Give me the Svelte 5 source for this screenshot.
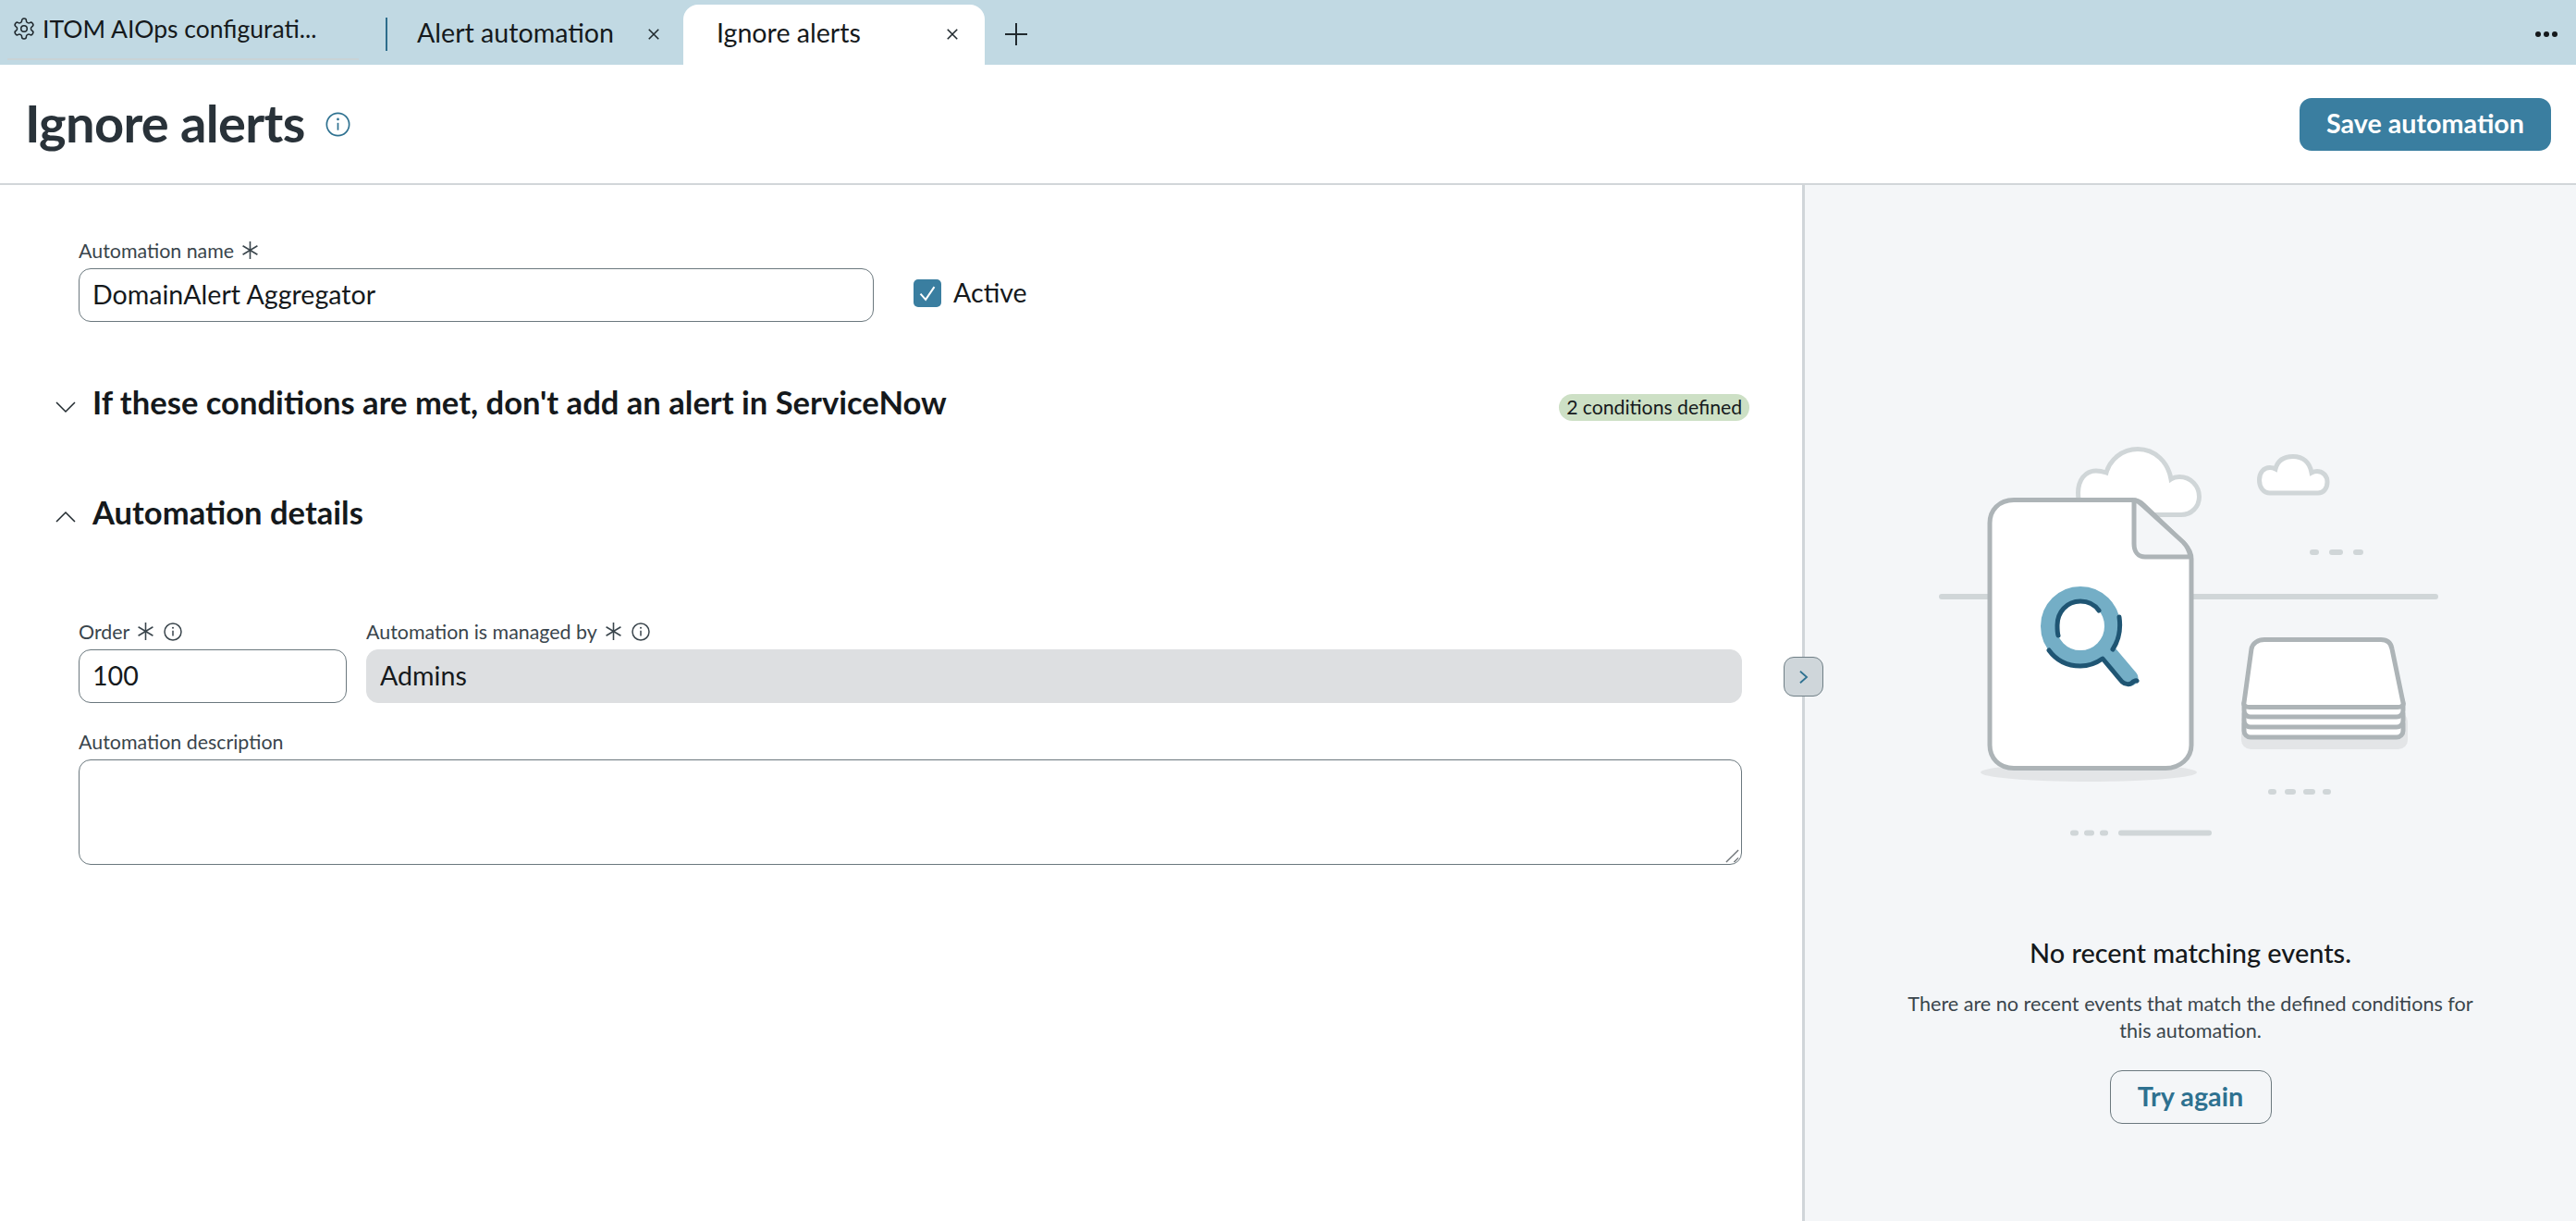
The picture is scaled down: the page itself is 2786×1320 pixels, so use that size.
<script>
  const tabs = [
    { label: "Alert automation", active: false },
    { label: "Ignore alerts", active: true }
  ];
</script>

{#snippet star()}
  <svg class="star" viewBox="0 0 18 18" aria-hidden="true">
    <path d="M9 0v18M1.500 4.500l15 9M16.500 4.500l-15 9" />
  </svg>
{/snippet}

{#snippet info(cls)}
  <svg class={cls} viewBox="0 0 24 24" aria-hidden="true">
    <circle cx="12" cy="12" r="10.800" />
    <path d="M12 10.500v7" />
    <circle class="dot" cx="12" cy="7" r="1.200" />
  </svg>
{/snippet}

{#snippet cross()}
  <svg class="close" viewBox="0 0 16 16" aria-hidden="true">
    <path d="M2 2l12 12M14 2L2 14" />
  </svg>
{/snippet}

<div class="page">
  <nav class="tabbar">
    <div class="tab-home">
      <svg class="gear" viewBox="1 1 22 22" aria-hidden="true">
        <path d="M12.220 2h-.44a2 2 0 0 0-2 2v.18a2 2 0 0 1-1 1.730l-.43.25a2 2 0 0 1-2 0l-.15-.08a2 2 0 0 0-2.730.73l-.22.38a2 2 0 0 0 .73 2.730l.15.1a2 2 0 0 1 1 1.720v.51a2 2 0 0 1-1 1.740l-.15.09a2 2 0 0 0-.73 2.730l.22.38a2 2 0 0 0 2.730.73l.15-.08a2 2 0 0 1 2 0l.43.25a2 2 0 0 1 1 1.730V20a2 2 0 0 0 2 2h.44a2 2 0 0 0 2-2v-.18a2 2 0 0 1 1-1.730l.43-.25a2 2 0 0 1 2 0l.15.08a2 2 0 0 0 2.730-.73l.22-.39a2 2 0 0 0-.73-2.730l-.15-.08a2 2 0 0 1-1-1.740v-.5a2 2 0 0 1 1-1.740l.15-.09a2 2 0 0 0 .73-2.730l-.22-.38a2 2 0 0 0-2.730-.73l-.15.08a2 2 0 0 1-2 0l-.43-.25a2 2 0 0 1-1-1.730V4a2 2 0 0 0-2-2z" />
        <circle cx="12" cy="12" r="3" />
      </svg>
      <span>ITOM AIOps configurati...</span>
    </div>
    <span class="sep"></span>
    {#each tabs as tab}
      <div class="tab" class:active={tab.active}>
        <span class="tab-label">{tab.label}</span>
        {@render cross()}
      </div>
    {/each}
    <svg class="plus" viewBox="0 0 24 24" aria-hidden="true">
      <path d="M12 0v24M0 12h24" />
    </svg>
    <div class="more"><i></i><i></i><i></i></div>
  </nav>

  <header class="head">
    <h1>Ignore alerts</h1>
    {@render info("info-lg")}
    <button class="save">Save automation</button>
  </header>

  <main class="body">
    <section class="form">
      <div class="name-row">
        <div class="name-field">
          <div class="label">Automation name {@render star()}</div>
          <input class="input" value="DomainAlert Aggregator" />
        </div>
        <label class="active-check">
          <span class="box">
            <svg viewBox="0 0 24 24" aria-hidden="true"><path d="M6 12.500l4.500 5L18 6.500" /></svg>
          </span>
          Active
        </label>
      </div>

      <div class="section first">
        <svg class="chev" viewBox="0 0 22 14" aria-hidden="true"><path d="M1 2l10 10L21 2" /></svg>
        <h2>If these conditions are met, don't add an alert in ServiceNow</h2>
        <span class="badge">2 conditions defined</span>
      </div>

      <div class="section second">
        <svg class="chev" viewBox="0 0 22 14" aria-hidden="true"><path d="M1 12L11 2l10 10" /></svg>
        <h2>Automation details</h2>
      </div>

      <div class="details">
        <div class="detail-row">
          <div class="order">
            <div class="label">Order {@render star()} {@render info("info-sm")}</div>
            <input class="input" value="100" />
          </div>
          <div class="managed">
            <div class="label">Automation is managed by {@render star()} {@render info("info-sm")}</div>
            <input class="input readonly" value="Admins" readonly />
          </div>
        </div>
        <div class="label desc-label">Automation description</div>
        <div class="desc-wrap">
          <textarea class="input desc"></textarea>
          <svg class="grip" viewBox="0 0 16 16" aria-hidden="true"><path d="M1 15L15 1M10 15l5-5" /></svg>
        </div>
      </div>
    </section>

    <button class="toggle" aria-label="Expand">
      <svg viewBox="0 0 12 18" aria-hidden="true"><path d="M2 2l8 7-8 7" /></svg>
    </button>

    <aside class="side">
      <svg class="art" viewBox="2090 480 560 430" aria-hidden="true">
        <!-- clouds -->
        <path class="cloud" d="M2360 556.500H2265C2254 556 2248.500 545 2248.500 533C2248.500 519 2256 509 2268 509C2272 509 2276 510 2279 511C2283 497 2296 485.500 2313 485.500C2332 485.500 2346 500 2349 518C2352 516 2355 515.500 2358 515.500C2371 515.500 2379.500 526 2379.500 537C2379.500 548 2371 556.500 2360 556.500z" />
        <path class="cloud" d="M2456 533C2449 533 2444.500 527 2444.500 519C2444.500 511 2449 505.500 2456 505.500C2458 505.500 2460 506 2462 507C2464 499 2470 493.500 2481 493.500C2492 493.500 2499 500 2501 511C2503 510 2505 509.500 2507 509.500C2514 509.500 2518 515 2518 521C2518 528 2514 533 2508 533z" />
        <!-- horizon and dashes -->
        <path class="line" d="M2101 645h534" />
        <path class="dash" d="M2502 597h4M2523 597h9M2549 597h5M2457 856h3M2475 856h6M2495 856h7M2516 856h3M2243 900.500h3M2258 900.500h5M2275 900.500h3M2295 900.500h95" />
        <!-- shadows -->
        <ellipse class="shade" cx="2260" cy="835" rx="117" ry="10" />
        <rect class="shade" x="2425" y="770" width="180" height="40" rx="10" />
        <!-- stack -->
        <rect class="sheet" x="2428" y="775" width="172" height="22" rx="7" />
        <rect class="sheet" x="2428" y="764" width="172" height="22" rx="7" />
        <rect class="sheet" x="2428" y="753" width="172" height="22" rx="7" />
        <path class="sheet" d="M2450 691.500H2576c7 0 11 4 12 10l12 58c1 3-2 5-6 5H2434c-4 0-7-2-6-5l8-58c1-6 7-10 14-10z" />
        <!-- document -->
        <path class="sheet" d="M2179 540.500h128c5 0 9 2 12 5l44 42c6 6 8 11 8 17v201c0 14-12 25-28 25h-164c-16 0-26-11-26-25v-240c0-14 10-25 26-25z" />
        <path class="fold" d="M2309 541v47c0 8 4 14 12 14h49c-1-6-3-11-8-16l-44-40c-3-3-6-5-9-5z" />
        <!-- magnifier -->
        <path class="glass" d="M2283 707l22 26" />
        <circle class="glass" cx="2251" cy="677" r="34.500" />
        <path class="lens" d="M2271 660c-5-7-12-10-20-10-15 0-25 12-25 26 0 4 0 8 1 11" />
        <path class="lens" d="M2293 667c2 14-1 26-7 35" />
        <path class="lens" d="M2217 703c8 11 20 17 34 17 9 0 17-3 24-8l21 25c3 3 9 4 12 0 2-1 3-2 4-1" />
      </svg>
      <h3>No recent matching events.</h3>
      <p>There are no recent events that match the defined conditions for this automation.</p>
      <button class="retry">Try again</button>
    </aside>
  </main>
</div>

<style>
  :global(body) {
    margin: 0;
    background: #fff;
    font-family: Lato, "Liberation Sans", sans-serif;
  }

  .page {
    width: 2786px;
    height: 1320px;
    overflow: hidden;
    color: #15191c;
  }

  .tabbar {
    display: flex;
    align-items: flex-end;
    height: 70px;
    background: #c1d9e3;
  }

  .tab-home {
    display: flex;
    align-items: center;
    gap: 8px;
    width: 380px;
    height: 60px;
    margin-left: 8px;
    margin-bottom: 5px;
    padding: 0 0 6px 6px;
    box-sizing: border-box;
    border-bottom: 2px solid #c9d3d6;
    font-size: 26.500px;
  }

  .gear {
    width: 24px;
    height: 24px;
    fill: none;
    stroke: #20292e;
    stroke-width: 1.400;
    stroke-linejoin: round;
  }

  .sep {
    align-self: flex-start;
    width: 2px;
    height: 36px;
    margin: 19px 32px 0 29px;
    background: #2e6d8c;
  }

  .tab {
    display: flex;
    align-items: center;
    height: 65px;
    box-sizing: border-box;
    font-size: 28.600px;
    padding-bottom: 6px;
  }

  .tab:not(.active) {
    width: 288px;
  }

  .tab.active {
    width: 326px;
    padding: 0 28px 6px 36px;
    background: #fff;
    border-radius: 16px 16px 0 0;
  }

  .tab-label {
    flex: 1;
    white-space: nowrap;
  }

  .close {
    flex: none;
    width: 14px;
    height: 14px;
    margin-top: 4px;
    fill: none;
    stroke: #20292e;
    stroke-width: 1.800;
  }

  .tab:not(.active) .close {
    margin-right: 25px;
  }

  .plus {
    align-self: flex-start;
    width: 24px;
    height: 24px;
    margin: 25px 0 0 22px;
    fill: none;
    stroke: #20292e;
    stroke-width: 2;
  }

  .more {
    display: flex;
    gap: 3px;
    align-self: flex-start;
    margin: 34px 20px 0 auto;
  }

  .more i {
    width: 6px;
    height: 6px;
    border-radius: 50%;
    background: #15191c;
  }

  .head {
    display: flex;
    align-items: center;
    height: 130px;
    padding: 0 27px 0 28px;
    box-sizing: border-box;
    border-bottom: 2px solid #d2d6d9;
  }

  h1 {
    margin: 0 22px 2px -1px;
    font-size: 56px;
    font-weight: 700;
    letter-spacing: -0.650px;
    color: #293239;
    line-height: 1;
  }

  .info-lg {
    width: 27px;
    height: 27px;
    fill: none;
    stroke: #2e7190;
    stroke-width: 1.500;
  }

  .info-lg .dot {
    fill: #2e7190;
    stroke: none;
  }

  .save {
    margin-left: auto;
    width: 272px;
    height: 57px;
    padding: 0 0 2px;
    border: 0;
    border-radius: 13px;
    background: #3a7ea0;
    color: #fff;
    font: 700 28.700px Lato, sans-serif;
  }

  .body {
    position: relative;
    display: flex;
    height: 1120px;
  }

  .form {
    width: 1952px;
    box-sizing: border-box;
    padding: 57px 65px 0 0;
    border-right: 3px solid #d0d5d9;
  }

  .name-row {
    display: flex;
    align-items: flex-end;
    padding-left: 85px;
  }

  .name-field {
    width: 860px;
  }

  .label {
    display: flex;
    align-items: center;
    gap: 8px;
    height: 30px;
    margin-bottom: 3px;
    padding-bottom: 3px;
    box-sizing: border-box;
    font-size: 21.400px;
    color: #3a454c;
  }

  .star {
    width: 19px;
    height: 19px;
    fill: none;
    stroke: #3a454c;
    stroke-width: 1.500;
  }

  .info-sm {
    width: 20px;
    height: 20px;
    margin-left: 2px;
    fill: none;
    stroke: #3a454c;
    stroke-width: 1.800;
  }

  .info-sm .dot {
    fill: #3a454c;
    stroke: none;
  }

  .input {
    display: block;
    width: 100%;
    height: 58px;
    box-sizing: border-box;
    padding: 0 14px 3px;
    border: 1.500px solid #6b787e;
    border-radius: 13px;
    background: #fff;
    color: #15191c;
    font: 400 28.600px Lato, sans-serif;
    outline: none;
  }

  .active-check {
    display: flex;
    align-items: center;
    gap: 13px;
    height: 58px;
    margin-left: 43px;
    padding-bottom: 6px;
    box-sizing: border-box;
    font-size: 28.600px;
  }

  .box {
    display: flex;
    width: 30px;
    height: 30px;
    margin-top: 2px;
    border-radius: 5px;
    background: #3a7ea0;
  }

  .box svg {
    width: 30px;
    height: 30px;
    fill: none;
    stroke: #fff;
    stroke-width: 1.600;
  }

  .section {
    display: flex;
    align-items: center;
    height: 44px;
    padding-left: 60px;
  }

  .section.first {
    margin-top: 64px;
  }

  .section.second {
    margin-top: 75px;
  }

  .chev {
    flex: none;
    width: 22px;
    height: 14px;
    margin: 12px 18px 0 0;
    fill: none;
    stroke: #20292e;
    stroke-width: 1.500;
  }

  h2 {
    margin: 0;
    font-size: 34.600px;
    font-weight: 700;
    color: #15191c;
    white-space: nowrap;
  }

  .badge {
    margin-left: auto;
    margin-right: -8px;
    height: 29px;
    padding: 0 8px;
    border-radius: 15px;
    background: #cde0c5;
    font-size: 21.200px;
    line-height: 29px;
    white-space: nowrap;
    transform: translateY(6px);
  }

  .details {
    margin-top: 94px;
    padding-left: 85px;
  }

  .detail-row {
    display: flex;
    gap: 21px;
  }

  .order {
    flex: none;
    width: 290px;
  }

  .managed {
    flex: 1;
  }

  .readonly {
    border-color: #dddfe1;
    background: #dddfe1;
  }

  .desc-label {
    margin-top: 28px;
  }

  .desc-wrap {
    position: relative;
  }

  .desc {
    height: 114px;
    resize: none;
  }

  .grip {
    position: absolute;
    right: 3px;
    bottom: 2px;
    width: 15px;
    height: 15px;
    fill: none;
    stroke: #6f7478;
    stroke-width: 1.500;
  }

  .toggle {
    position: absolute;
    top: 510px;
    left: 1929px;
    width: 43px;
    height: 43px;
    padding: 0;
    border: 1.500px solid #6f7f86;
    border-radius: 11px;
    background: #cfd6da;
  }

  .toggle svg {
    display: block;
    width: 11px;
    height: 16px;
    margin: auto;
    fill: none;
    stroke: #2e7190;
    stroke-width: 2;
  }

  .side {
    flex: 1;
    display: flex;
    flex-direction: column;
    align-items: center;
    background: #f4f6f8;
    text-align: center;
  }

  .art {
    flex: none;
    width: 560px;
    height: 430px;
    margin-top: 280px;
  }

  .cloud {
    fill: #fff;
    stroke: #d0d6d8;
    stroke-width: 5;
  }

  .line,
  .dash {
    fill: none;
    stroke: #d0d6d8;
    stroke-width: 6;
    stroke-linecap: round;
  }

  .shade {
    fill: #e3e5e7;
  }

  .sheet {
    fill: #fff;
    stroke: #adb4b7;
    stroke-width: 5;
  }

  .fold {
    fill: #f4f6f8;
    stroke: #adb4b7;
    stroke-width: 5;
    stroke-linejoin: round;
  }

  .glass {
    fill: none;
    stroke: #74aec6;
    stroke-width: 17;
    stroke-linecap: round;
  }

  .lens {
    fill: none;
    stroke: #1f5573;
    stroke-width: 5;
    stroke-linecap: round;
    stroke-linejoin: round;
  }

  h3 {
    margin: 100px 0 0;
    font-size: 28.900px;
    font-weight: 500;
    line-height: 40px;
    color: #15191c;
  }

  .side p {
    width: 640px;
    margin: 21px 0 0;
    font-size: 21.600px;
    line-height: 29px;
    color: #3a454c;
  }

  .retry {
    width: 175px;
    height: 58px;
    margin-top: 28px;
    padding: 0 0 2px;
    border: 1.500px solid #6b787e;
    border-radius: 13px;
    background: transparent;
    color: #2e7190;
    font: 700 28.800px Lato, sans-serif;
  }
</style>
